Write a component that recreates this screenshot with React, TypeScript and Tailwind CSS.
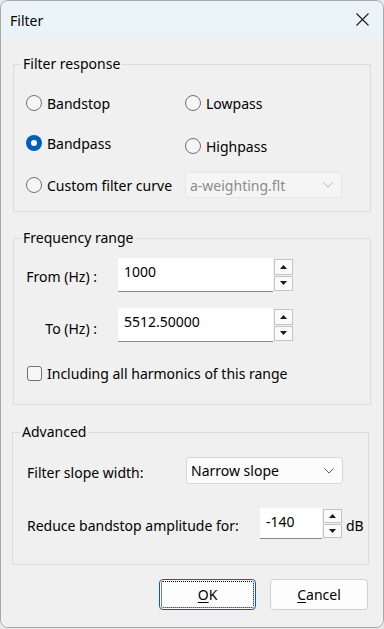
import type { ReactNode } from 'react'

const font = { fontFamily: '"Noto Sans", "Liberation Sans", sans-serif' }

function Radio({ checked, label }: { checked?: boolean; label: string }) {
  return (
    <label className="flex items-center h-5 gap-[5px]">
      {checked ? (
        <span className="w-4 h-4 rounded-full bg-[#005fb8] flex items-center justify-center">
          <span className="w-[6px] h-[6px] rounded-full bg-white" />
        </span>
      ) : (
        <span className="w-4 h-4 rounded-full border border-[#707070] bg-[#f6f6f6]" />
      )}
      <span>{label}</span>
    </label>
  )
}

function Chevron({ color = '#606060' }: { color?: string }) {
  return (
    <svg width="10" height="6" viewBox="0 0 10 6" fill="none">
      <path d="M0.5 0.5 L5 5 L9.5 0.5" stroke={color} strokeWidth="1" />
    </svg>
  )
}

function Select({ value, disabled }: { value: string; disabled?: boolean }) {
  return (
    <div
      className={
        'w-[157px] h-full flex items-center justify-between pl-[4px] pr-[8px] rounded-[3px] border ' +
        (disabled ? 'bg-[#f5f5f5] border-[#e6e6e6] text-[#8c8c8c]' : 'bg-[#fbfbfb] border-[#d6d6d6] text-black')
      }
    >
      <span>{value}</span>
      <Chevron color={disabled ? '#b5b5b5' : '#5c5c5c'} />
    </div>
  )
}

function Spin() {
  return (
    <div className="flex flex-col w-[21px] h-full bg-[#f0f0f0]">
      <div className="flex-1 m-px mb-0 border border-[#c4c4c4] bg-[#fafafa] flex items-center justify-center">
        <svg width="7" height="4" viewBox="0 0 7 4"><path d="M3.5 0 L7 4 L0 4 Z" fill="#1a1a1a" /></svg>
      </div>
      <div className="flex-1 m-px border border-[#c4c4c4] bg-[#fafafa] flex items-center justify-center">
        <svg width="7" height="4" viewBox="0 0 7 4"><path d="M0 0 L7 0 L3.5 4 Z" fill="#1a1a1a" /></svg>
      </div>
    </div>
  )
}

function NumberBox({ value, w, h }: { value: string; w: string; h: string }) {
  return (
    <div className={'flex ' + h}>
      <div className={'bg-white border-b border-[#8a8a8a] pl-[6px] pt-[3px] ' + w}>{value}</div>
      <Spin />
    </div>
  )
}

function Group({ title, className, children }: { title: string; className: string; children: ReactNode }) {
  return (
    <fieldset className={'border border-[#dcdcdc] ' + className}>
      <legend className="ml-[7px] px-[2px] leading-5">{title}</legend>
      {children}
    </fieldset>
  )
}

export default function App() {
  return (
    <div className="w-[384px] h-[629px] bg-[#e8e8e8] text-[14px] text-black" style={font}>
      <div className="w-[384px] h-[628px] flex flex-col border border-[#a8a8a8] rounded-[8px] overflow-hidden">
        <div className="h-[37px] bg-[#eaf4f8] flex items-center justify-between pl-[9px] pr-[14px]">
          <span className="pt-px">Filter</span>
          <svg width="13" height="13" viewBox="0 0 13 13" fill="none">
            <path d="M0.5 0.5 L12.5 12.5 M12.5 0.5 L0.5 12.5" stroke="#1a1a1a" strokeWidth="1.1" />
          </svg>
        </div>
        <div className="flex-1 bg-[#f0f0f0] flex flex-col">
          <Group title="Filter response" className="mt-4 ml-3 w-[358px] h-[158px]">
            <div className="flex flex-col pl-[12px]">
              <div className="flex mt-[19px]">
                <div className="w-[159px]"><Radio label="Bandstop" /></div>
                <Radio label="Lowpass" />
              </div>
              <div className="flex items-start mt-[20px]">
                <div className="w-[159px]"><Radio checked label="Bandpass" /></div>
                <div className="mt-[3px]"><Radio label="Highpass" /></div>
              </div>
              <div className="flex items-center mt-[16px] h-[26px]">
                <div className="w-[159px]"><Radio label="Custom filter curve" /></div>
                <Select value="a-weighting.flt" disabled />
              </div>
            </div>
          </Group>

          <Group title="Frequency range" className="mt-4 ml-3 w-[358px] h-[177px]">
            <div className="flex items-center mt-[10px]">
              <span className="w-[86px] text-right pr-[3px] pt-[3px]">From (Hz) :</span>
              <div className="ml-[18px]"><NumberBox value="1000" w="w-[155px]" h="h-[34px]" /></div>
            </div>
            <div className="flex items-center mt-[16px]">
              <span className="w-[86px] text-right pr-[3px] pt-[7px]">To (Hz) :</span>
              <div className="ml-[18px]"><NumberBox value="5512.50000" w="w-[155px]" h="h-[34px]" /></div>
            </div>
            <label className="flex items-center gap-[5px] h-5 mt-[21px] pl-[13px]">
              <span className="w-[15px] h-[15px] rounded-[3px] border border-[#707070] bg-[#f6f6f6]" />
              <span>Including all harmonics of this range</span>
            </label>
          </Group>

          <Group title="Advanced" className="mt-[17px] ml-[11px] w-[357px] h-[143px]">
            <div className="flex items-center mt-[15px] h-[27px] pl-[14px]">
              <span className="w-[159px] pt-[3px]">Filter slope width:</span>
              <Select value="Narrow slope" />
            </div>
            <div className="flex items-center mt-[24px] h-[31px] pl-[14px]">
              <span className="w-[233px] pt-[3px]">Reduce bandstop amplitude for:</span>
              <NumberBox value="-140" w="w-[62px]" h="h-[31px]" />
              <span className="ml-[3px] pt-[3px]">dB</span>
            </div>
          </Group>

          <div className="flex justify-end gap-[14px] mt-[14px] pr-[15px]">
            <button className="w-[97px] h-[31px] bg-[#fdfdfd] border border-[#005fb8] rounded-[4px] outline-1 outline-dotted outline-black -outline-offset-3">
              <span className="underline underline-offset-2">O</span>K
            </button>
            <button className="w-[98px] h-[31px] bg-[#fdfdfd] border border-[#d0d0d0] rounded-[4px]">
              <span className="underline underline-offset-2">C</span>ancel
            </button>
          </div>
        </div>
      </div>
    </div>
  )
}
